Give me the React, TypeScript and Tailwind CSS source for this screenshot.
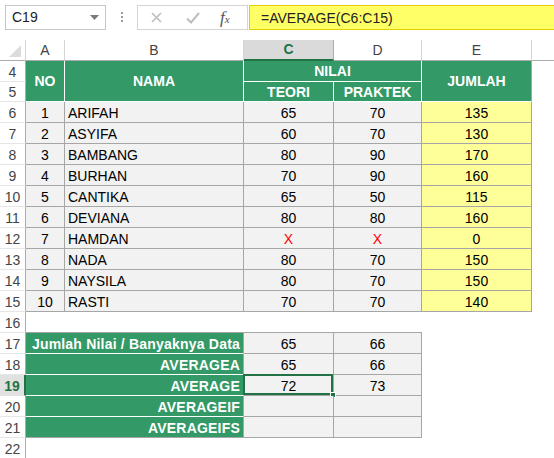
import React from 'react';

type Row = [number, string, number | string, number | string, number];

const rows: Row[] = [
  [1, 'ARIFAH', 65, 70, 135],
  [2, 'ASYIFA', 60, 70, 130],
  [3, 'BAMBANG', 80, 90, 170],
  [4, 'BURHAN', 70, 90, 160],
  [5, 'CANTIKA', 65, 50, 115],
  [6, 'DEVIANA', 80, 80, 160],
  [7, 'HAMDAN', 'X', 'X', 0],
  [8, 'NADA', 80, 70, 150],
  [9, 'NAYSILA', 80, 70, 150],
  [10, 'RASTI', 70, 70, 140],
];

const summary: [string, string, string][] = [
  ['Jumlah Nilai / Banyaknya Data', '65', '66'],
  ['AVERAGEA', '65', '66'],
  ['AVERAGE', '72', '73'],
  ['AVERAGEIF', '', ''],
  ['AVERAGEIFS', '', ''],
];

const RowHead = ({ n, active = false }: { n: number; active?: boolean }) =>
  active ? (
    <div className="flex items-center justify-center bg-[#e1e1e1] border-r-2 border-r-[#217346] border-b border-b-[#e1e1e1] pt-[2px] font-bold text-[#217346]">
      {n}
    </div>
  ) : (
    <div className="flex items-center justify-center bg-white border-r border-r-[#ababab] border-b border-b-[#e6e6e6] pt-[2px] text-[#444]">
      {n}
    </div>
  );

const gray = 'flex items-center bg-[#f2f2f2] border-r border-b border-[#a6a6a6] pt-[2px]';
const head = 'flex items-center justify-center bg-[#339966] text-white font-bold border-r border-b border-white pt-[1px]';

const Toolbar = () => (
  <div className="flex h-[40px] items-start pl-[5px] pt-[5px]">
    <div className="relative flex h-[25px] w-[101px] items-center border border-[#c6c6c6] bg-white pl-[6px] text-[#222]">
      C19
      <svg className="absolute right-[6px] top-[9px]" width="9" height="6" viewBox="0 0 9 6">
        <polygon points="0,0 9,0 4.5,5" fill="#7a7a7a" />
      </svg>
    </div>
    <div className="flex w-[31px] justify-center pt-[7px]">
      <div className="flex flex-col gap-[2px]">
        <span className="h-[2px] w-[2px] bg-[#9a9a9a]" />
        <span className="h-[2px] w-[2px] bg-[#9a9a9a]" />
        <span className="h-[2px] w-[2px] bg-[#9a9a9a]" />
      </div>
    </div>
    <div className="flex h-[25px] w-[111px] items-center border border-[#d4d4d4] bg-white">
      <svg className="ml-[13px]" width="11" height="11" viewBox="0 0 11 11">
        <path d="M1 1L10 10M10 1L1 10" stroke="#bdbdbd" strokeWidth="1.6" />
      </svg>
      <svg className="ml-[24px]" width="14" height="12" viewBox="0 0 14 12">
        <path d="M1 6.5L5 10.5L13 1" stroke="#bdbdbd" strokeWidth="2" fill="none" />
      </svg>
      <span className="ml-[20px] font-['Liberation_Serif',serif] text-[17px] italic leading-none text-[#555]">
        f<span className="text-[11px]">x</span>
      </span>
    </div>
    <div className="-mr-[6px] ml-[1px] flex h-[25px] flex-1 items-center border border-[#e3cf00] bg-[#ffff66] pl-[11px] pt-[1px] text-[#222]">
      =AVERAGE(C6:C15)
    </div>
  </div>
);

export default function App() {
  return (
    <div className="h-[458px] w-[554px] overflow-hidden bg-white font-['Liberation_Sans',Arial,sans-serif] text-[14px] text-black">
      <Toolbar />
      <div className="grid grid-cols-[26px_39px_179px_90px_88px_110px_1fr] grid-rows-[21px_21px_20px_repeat(17,21px)]">
        {/* column headers */}
        <div className="relative border-r border-b border-r-[#d4d4d4] border-b-[#ababab]">
          <svg className="absolute right-[4px] bottom-[3px]" width="12" height="12" viewBox="0 0 12 12">
            <polygon points="12,0 12,12 0,12" fill="#dcdcdc" />
          </svg>
        </div>
        <div className="flex items-center justify-center border-r border-b border-r-[#d4d4d4] border-b-[#ababab] text-[#444]">A</div>
        <div className="flex items-center justify-center border-r border-b border-r-[#d4d4d4] border-b-[#ababab] text-[#444]">B</div>
        <div className="flex items-center justify-center border-r border-b-2 border-r-[#ababab] border-b-[#217346] bg-[#dadada] font-bold text-[#217346]">C</div>
        <div className="flex items-center justify-center border-r border-b border-r-[#d4d4d4] border-b-[#ababab] text-[#444]">D</div>
        <div className="flex items-center justify-center border-r border-b border-r-[#d4d4d4] border-b-[#ababab] text-[#444]">E</div>
        <div className="border-b border-b-[#ababab]" />

        {/* header rows 4-5 */}
        <RowHead n={4} />
        <div className={`${head} row-span-2`}>NO</div>
        <div className={`${head} row-span-2`}>NAMA</div>
        <div className={`${head} col-span-2`}>NILAI</div>
        <div className={`${head} row-span-2 border-r-[#a6a6a6]`}>JUMLAH</div>
        <div />
        <RowHead n={5} />
        <div className={head}>TEORI</div>
        <div className={head}>PRAKTEK</div>
        <div />

        {/* data rows 6-15 */}
        {rows.map(([no, name, t, p, sum], i) => (
          <React.Fragment key={no}>
            <RowHead n={i + 6} />
            <div className={`${gray} justify-center`}>{no}</div>
            <div className={`${gray} pl-[3px]`}>{name}</div>
            <div className={`${gray} justify-center ${t === 'X' ? 'text-[#ff0000]' : ''}`}>{t}</div>
            <div className={`${gray} justify-center ${p === 'X' ? 'text-[#ff0000]' : ''}`}>{p}</div>
            <div className="flex items-center justify-center border-r border-b border-[#a6a6a6] bg-[#ffff99] pt-[2px]">{sum}</div>
            <div />
          </React.Fragment>
        ))}

        {/* row 16 */}
        <RowHead n={16} />
        <div className="col-span-4 border-b border-[#a6a6a6]" />
        <div className="col-span-2" />

        {/* summary rows 17-21 */}
        {summary.map(([label, c, d], i) => {
          const active = i === 2;
          const last = i === summary.length - 1;
          return (
            <React.Fragment key={label}>
              <RowHead n={i + 17} active={active} />
              <div
                className={`col-span-2 flex items-center justify-end border-r border-b border-r-[#a6a6a6] bg-[#339966] pr-[3px] pt-[2px] font-bold tracking-[0.2px] text-white ${
                  last ? 'border-b-[#a6a6a6]' : 'border-b-white'
                }`}
              >
                {label}
              </div>
              <div className={`${gray} relative justify-center`}>
                {c}
                {active && (
                  <>
                    <div className="absolute -left-[1px] -top-[1px] right-0 bottom-0 border-2 border-[#217346]" />
                    <div className="absolute -bottom-[3px] -right-[3px] h-[6px] w-[6px] border border-white bg-[#217346]" />
                  </>
                )}
              </div>
              <div className={`${gray} justify-center`}>{d}</div>
              <div className="col-span-2" />
            </React.Fragment>
          );
        })}

        {/* row 22 */}
        <RowHead n={22} />
        <div className="col-span-6" />
      </div>
    </div>
  );
}
